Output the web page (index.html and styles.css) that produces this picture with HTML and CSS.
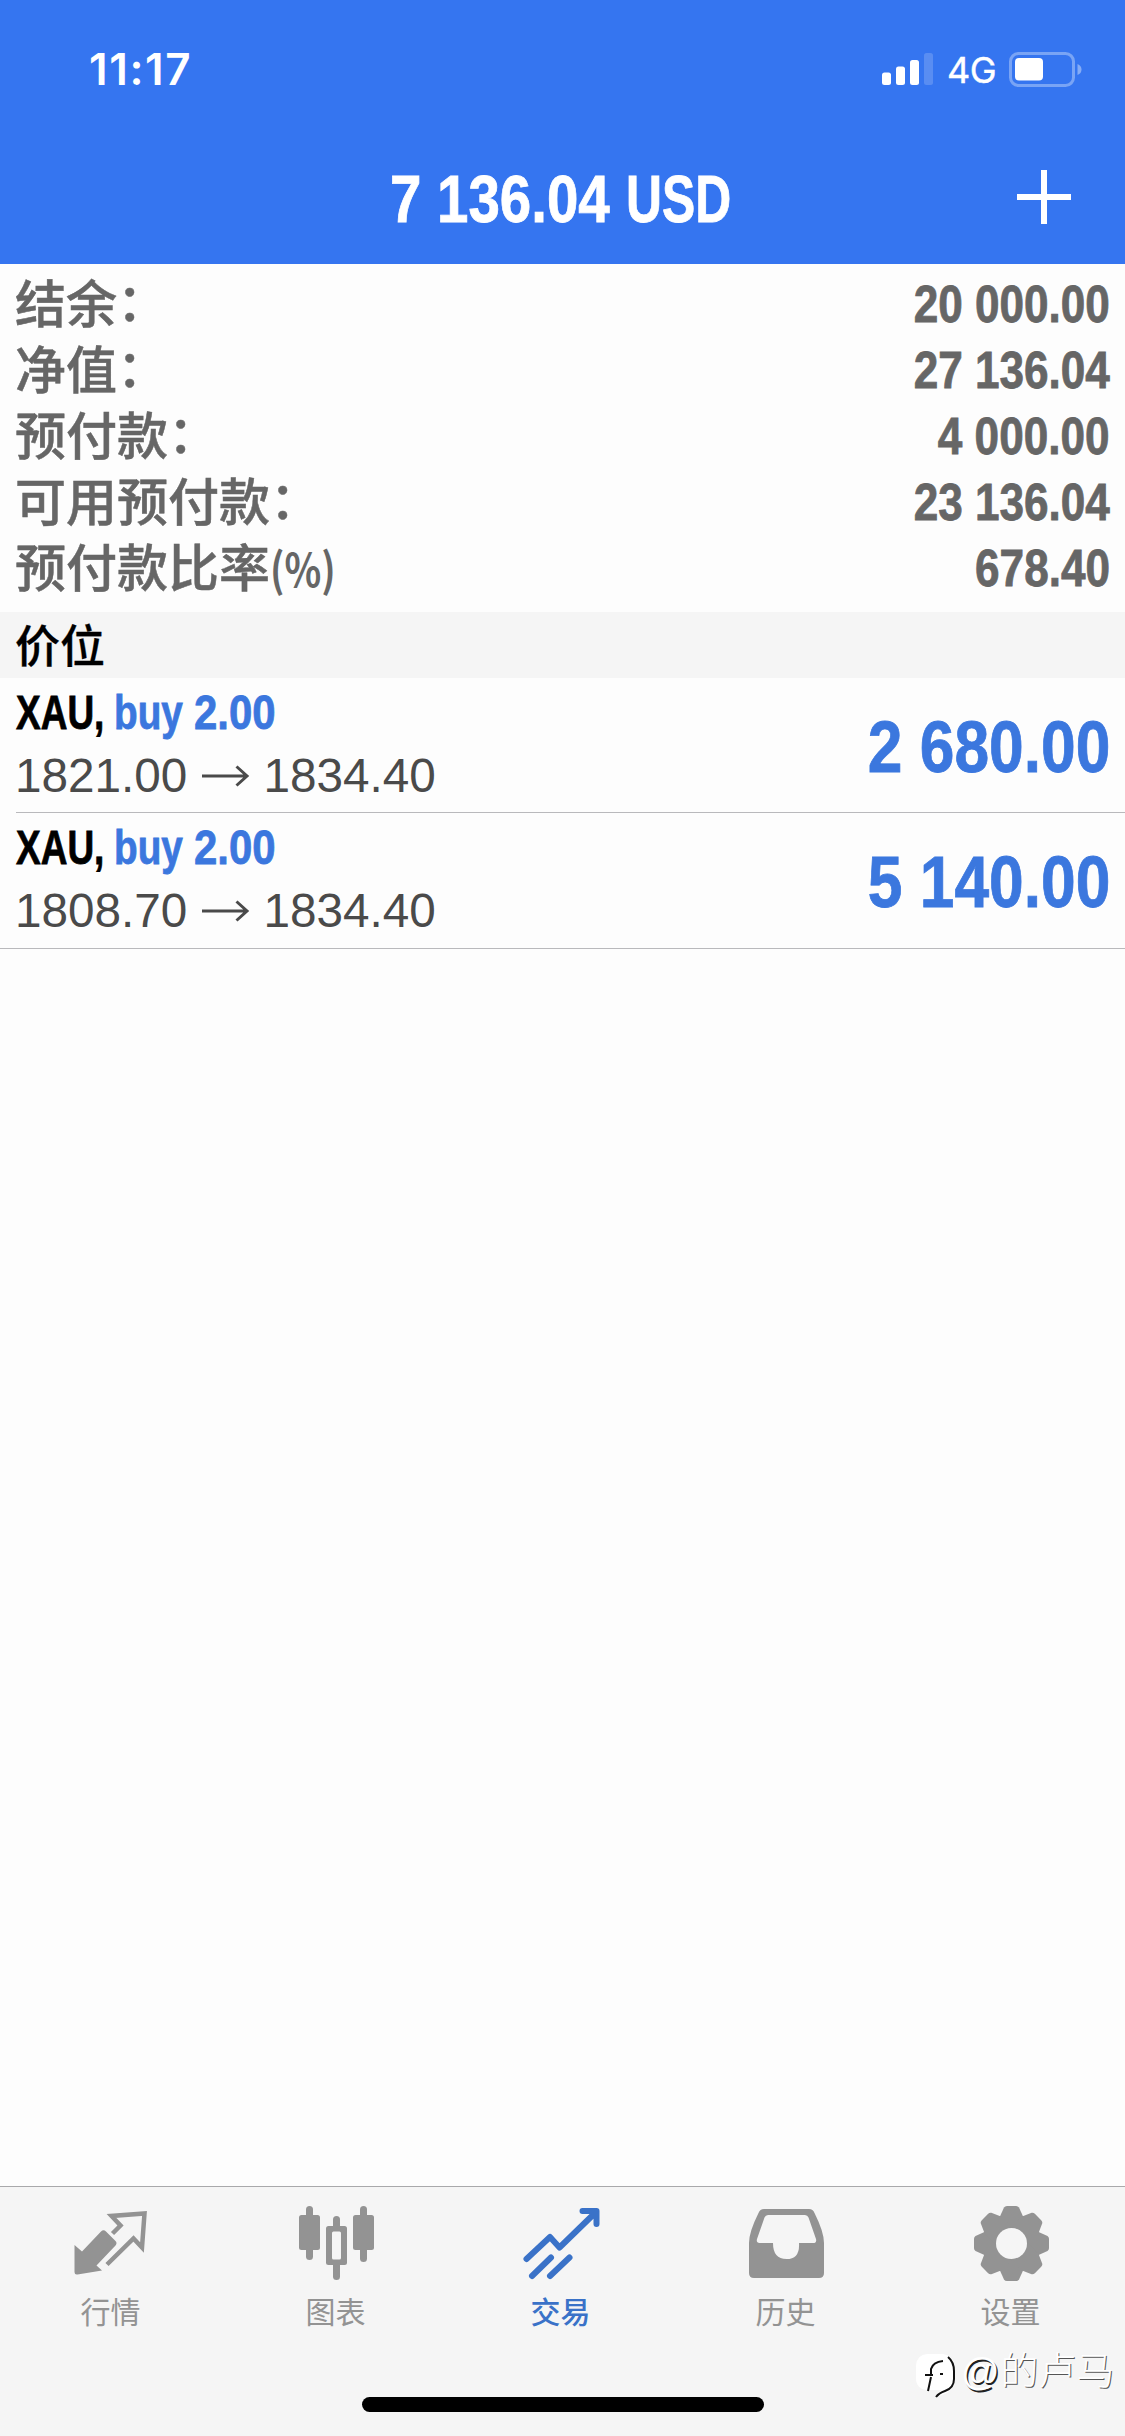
FILE: index.html
```html
<!DOCTYPE html>
<html lang="zh-CN">
<head>
<meta charset="utf-8">
<title>交易</title>
<link rel="stylesheet" href="styles.css">
</head>
<body>
<div class="app">
  <header class="header">
    <div class="status">
      <span class="time">11:17</span>
      <svg class="signal" width="52" height="34" viewBox="0 0 52 34" fill="#fff">
        <rect x="0" y="20.500" width="9" height="12.500" rx="2.500"/>
        <rect x="14" y="14.500" width="9" height="18.500" rx="2.500"/>
        <rect x="28" y="8" width="9" height="25" rx="2.500"/>
        <rect x="42" y="1" width="9" height="32" rx="2.500" opacity=".18"/>
      </svg>
      <span class="network">4G</span>
      <svg class="battery" width="75" height="36" viewBox="0 0 75 36">
        <rect x="3.500" y="1.500" width="63" height="32" rx="8" fill="none" stroke="#fff" stroke-opacity=".34" stroke-width="3"/>
        <rect x="8" y="6" width="28" height="22.500" rx="4" fill="#fff"/>
        <path d="M70.500 12q4 1.500 4 5.500t-4 5.500z" fill="#fff" opacity=".4"/>
      </svg>
    </div>
    <div class="titlebar">
      <h1 class="title"><span class="num">7 136.04</span><span class="currency">USD</span></h1>
      <svg class="plus" width="54" height="54" viewBox="0 0 54 54" stroke="#fff" stroke-width="6"><path d="M27 0v54M0 27h54"/></svg>
    </div>
  </header>

  <section class="summary">
    <div class="line"><span class="label">结余<span class="colon">：</span></span><span class="num">20 000.00</span></div>
    <div class="line"><span class="label">净值<span class="colon">：</span></span><span class="num">27 136.04</span></div>
    <div class="line"><span class="label">预付款<span class="colon">：</span></span><span class="num">4 000.00</span></div>
    <div class="line"><span class="label">可用预付款<span class="colon">：</span></span><span class="num">23 136.04</span></div>
    <div class="line"><span class="label">预付款比率<span class="unit">(%)</span></span><span class="num">678.40</span></div>
  </section>

  <h2 class="section">价位</h2>

  <section class="positions">
    <article class="position">
      <div>
        <div class="deal"><span class="symbol">XAU,</span><span class="side">buy</span><span class="num">2.00</span></div>
        <div class="prices"><span>1821.00</span><svg class="arrow" width="48" height="22" viewBox="0 0 48 22"><path d="M0 11h45M34.500 1.500 45 11l-10.500 9.500"/></svg><span>1834.40</span></div>
      </div>
      <span class="profit num">2 680.00</span>
    </article>
    <article class="position">
      <div>
        <div class="deal"><span class="symbol">XAU,</span><span class="side">buy</span><span class="num">2.00</span></div>
        <div class="prices"><span>1808.70</span><svg class="arrow" width="48" height="22" viewBox="0 0 48 22"><path d="M0 11h45M34.500 1.500 45 11l-10.500 9.500"/></svg><span>1834.40</span></div>
      </div>
      <span class="profit num">5 140.00</span>
    </article>
  </section>

  <footer class="footer">
    <nav class="tabs">
      <a class="tab">
        <svg width="80" height="80" viewBox="0 0 80 80">
          <path d="M3.500 40 11 46.500 30 26.500q2.500-2.500 5 0l9.500 9.500q2 2 0 4.500L25.500 60.500 31 65.500 6.500 69.500Q3.500 70 3.500 67z" fill="currentColor"/>
          <path d="M41.500 28.500 49.500 20.500 40.500 11 73.500 8.500 71 42.500 62.500 33.500 36 59.500" fill="none" stroke="currentColor" stroke-width="4.500"/>
        </svg>
        <span>行情</span>
      </a>
      <a class="tab">
        <svg width="80" height="80" viewBox="0 0 80 80" fill="currentColor">
          <rect x="10" y="1" width="7" height="54" rx="3.500"/><rect x="3" y="10" width="21" height="35" rx="2.500"/>
          <rect x="64" y="1" width="7" height="56" rx="3.500"/><rect x="57" y="10" width="21" height="35" rx="2.500"/>
          <rect x="37" y="11" width="7" height="64" rx="3.500"/><rect x="30" y="21" width="21" height="39" rx="2.500"/>
          <rect x="36" y="26.500" width="9" height="28" rx="1.500" fill="#f5f5f5"/>
        </svg>
        <span>图表</span>
      </a>
      <a class="tab active">
        <svg width="80" height="80" viewBox="0 0 80 80" fill="none" stroke="currentColor" stroke-width="6" stroke-linecap="round" stroke-linejoin="round">
          <path d="M5.500 54 29 32 38.500 42.500 75 7M61.500 6H75.500V19M11 71 30 52.500M29 71 48.500 52.500"/>
        </svg>
        <span>交易</span>
      </a>
      <a class="tab">
        <svg width="80" height="80" viewBox="0 0 80 80">
          <path fill="currentColor" fill-rule="evenodd" d="M18 4h45q4 0 5.500 4Q78 27 78 38v30q0 5-5 5H8q-5 0-5-5V38Q3 27 12.500 8 14 4 18 4zM22 10q-2.500 0-3.500 2.500L11 34q-1 4 2.500 4H27q0 16 13.500 16T53 38h14q4 0 3-4L62.500 12.500Q61.500 10 59 10z"/>
        </svg>
        <span>历史</span>
      </a>
      <a class="tab">
        <svg width="80" height="80" viewBox="-40.500 -38.500 80 80">
          <g fill="currentColor">
            <circle r="29.500"/>
            <path id="tooth" d="M-12-26-7.500-36q1-1.500 3-1.500h9q2 0 3 1.500L12-26V26L7.500 36q-1 1.500-3 1.500h-9q-2 0-3-1.500L-12 26z"/>
            <use href="#tooth" transform="rotate(45)"/><use href="#tooth" transform="rotate(90)"/><use href="#tooth" transform="rotate(135)"/>
          </g>
          <circle r="15.500" fill="#f5f5f5"/>
        </svg>
        <span>设置</span>
      </a>
    </nav>
    <div class="home"></div>
    <div class="watermark">
      <svg width="46" height="46" viewBox="0 0 46 46">
        <path d="M12 1h16Q40 3 40 17v8q0 14-16 18l2-6H12Q1 36 1 25V12Q2 2 12 1z" fill="#fff"/>
        <path d="M33 4q6 5 6 14v8q0 9-9 12-6 2-9 6" fill="none" stroke="#111" stroke-width="2"/>
        <path d="M13 38 16 24M16 21v-5q2-7 12-8M10 22h8M25 21h3" fill="none" stroke="#111" stroke-width="2"/>
      </svg>
      <span class="at">@</span><span class="user">的卢马</span>
    </div>
  </footer>
</div>
</body>
</html>
```
FILE: styles.css
```css
* { box-sizing: border-box; }
body { margin: 0; background: #fdfdfd; font-family: "Liberation Sans", "Noto Sans CJK SC", sans-serif; }
.app { width: 1125px; height: 2436px; display: flex; flex-direction: column; overflow: hidden; }
h1, h2 { margin: 0; font-weight: 700; }
svg { display: block; flex: none; }

.header { height: 264px; background: #3575f0; color: #fff; }
.status { height: 138px; display: flex; align-items: flex-start; padding: 52px 43px 0 89px; font-family: Inter, sans-serif; }
.time { font-size: 44px; font-weight: 600; line-height: 34px; letter-spacing: 1.600px; margin-right: auto; }
.network { width: 73px; padding-left: 13px; font-size: 36px; font-weight: 400; line-height: 37px; letter-spacing: -.5px; -webkit-text-stroke: .4px; }
.titlebar { height: 126px; display: grid; grid-template-columns: 390px 1fr 54px; padding: 0 54px 0 0; }
.title { grid-column: 2; display: flex; font-size: 66px; line-height: 122px; white-space: pre; }
.title .num { width: 236px; transform: scaleX(.855); }
.currency { transform: scaleX(.755); transform-origin: left; -webkit-text-stroke: .8px; }
.plus { margin-top: 32px; }

.num { display: block; transform: scaleX(.865); transform-origin: left; white-space: pre; font-weight: 700; -webkit-text-stroke: .8px; }

.summary { height: 348px; padding: 7px 15px 0 15px; color: #666; }
.line { height: 66px; display: flex; justify-content: space-between; line-height: 66px; font-size: 51px; }
.line .num { transform-origin: right; line-height: 68px; }
.label { display: flex; height: 66px; line-height: 60px; font-family: "Noto Sans CJK SC", sans-serif; font-weight: 500; -webkit-text-stroke: .5px; }
.colon { line-height: 56px; }
.unit { font-size: 46px; font-weight: 700; line-height: 64px; transform: scaleX(.83); transform-origin: left; -webkit-text-stroke: 0; }

.section { height: 66px; padding-left: 15px; background: #f5f5f5; font: 500 45px/63px "Noto Sans CJK SC", sans-serif; color: #000; -webkit-text-stroke: .3px; }

.position { display: flex; justify-content: space-between; height: 135px; margin-left: 16px; padding-right: 15px; border-bottom: 1px solid #b9b9bc; }
.position:last-child { margin-left: 0; padding-left: 16px; height: 136px; }
.deal { display: flex; height: 62px; padding-top: 4px; font-size: 49px; line-height: 60px; font-weight: 700; color: #3b77de; }
.deal .num { transform: scaleX(.855); }
.symbol { width: 98px; color: #000; transform: scaleX(.755); transform-origin: left; -webkit-text-stroke: .8px; }
.side { width: 80px; transform: scaleX(.79); transform-origin: left; -webkit-text-stroke: .8px; }
.prices { display: flex; align-items: center; height: 72px; margin-left: -1px; font-size: 47.700px; line-height: 72px; color: #4a4a4a; }
.arrow { margin: 0 13px 0 15px; fill: none; stroke: #4a4a4a; stroke-width: 3; }
.profit { font-size: 72px; line-height: 138px; color: #3b77de; transform-origin: right; }

.footer { position: relative; margin-top: auto; height: 250px; border-top: 1px solid #a9a9ab; background: #f5f5f5; }
.tabs { display: grid; grid-template-columns: repeat(5, 225px); margin-left: -2px; }
.tab { display: flex; flex-direction: column; align-items: center; padding-top: 18px; font: 400 30px/50px "Noto Sans CJK SC", sans-serif; color: #939393; }
.tab.active { color: #3a72c8; font-weight: 500; }
.home { width: 402px; height: 15px; margin: 62px auto 0; border-radius: 8px; background: #000; }
.watermark { position: absolute; left: 915px; top: 166px; display: flex; align-items: flex-start; height: 46px; color: #fff; font: 400 38px/38px "Liberation Sans", "Noto Sans CJK SC", sans-serif; text-shadow: 1.500px 1.500px .5px #222; }
.user { margin-left: 1px; font-weight: 300; line-height: 36px; text-shadow: 1px 1px .5px #555; }
```
